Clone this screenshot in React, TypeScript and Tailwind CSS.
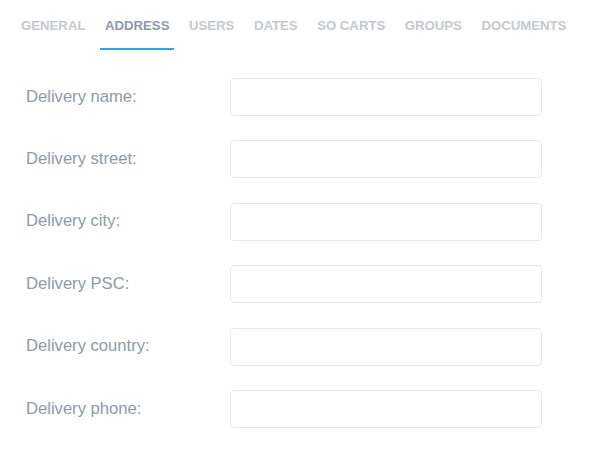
const tabs = ["GENERAL", "ADDRESS", "USERS", "DATES", "SO CARTS", "GROUPS", "DOCUMENTS"];

const fields = [
  "Delivery name:",
  "Delivery street:",
  "Delivery city:",
  "Delivery PSC:",
  "Delivery country:",
  "Delivery phone:",
];

const App = () => {
  return (
    <div className="w-[595px] h-[459px] bg-white font-['Liberation_Sans',Arial,sans-serif]">
      {/* Tabs */}
      <div className="flex gap-[9.5px] pl-[16px]">
        {tabs.map((t) => (
          <div
            key={t}
            className={`px-[5px] pt-[18px] pb-[14px] text-[13.2px] leading-[16px] font-bold border-b-2 ${
              t === "ADDRESS"
                ? "text-[#8a9aab] border-[#22a7ee]"
                : "text-[#c3c9d1] border-transparent"
            }`}
          >
            {t}
          </div>
        ))}
      </div>

      {/* Form */}
      <div className="flex flex-col gap-[24.4px] pl-[26px] pt-[28px]">
        {fields.map((f) => (
          <div key={f} className="flex items-center">
            <label className="w-[204px] text-[16.6px] text-[#8c9aab]">{f}</label>
            <input
              type="text"
              className="w-[312px] h-[38px] border border-[#e6e8eb] rounded-[4px] outline-none px-3"
            />
          </div>
        ))}
      </div>
    </div>
  );
};

export default App;
